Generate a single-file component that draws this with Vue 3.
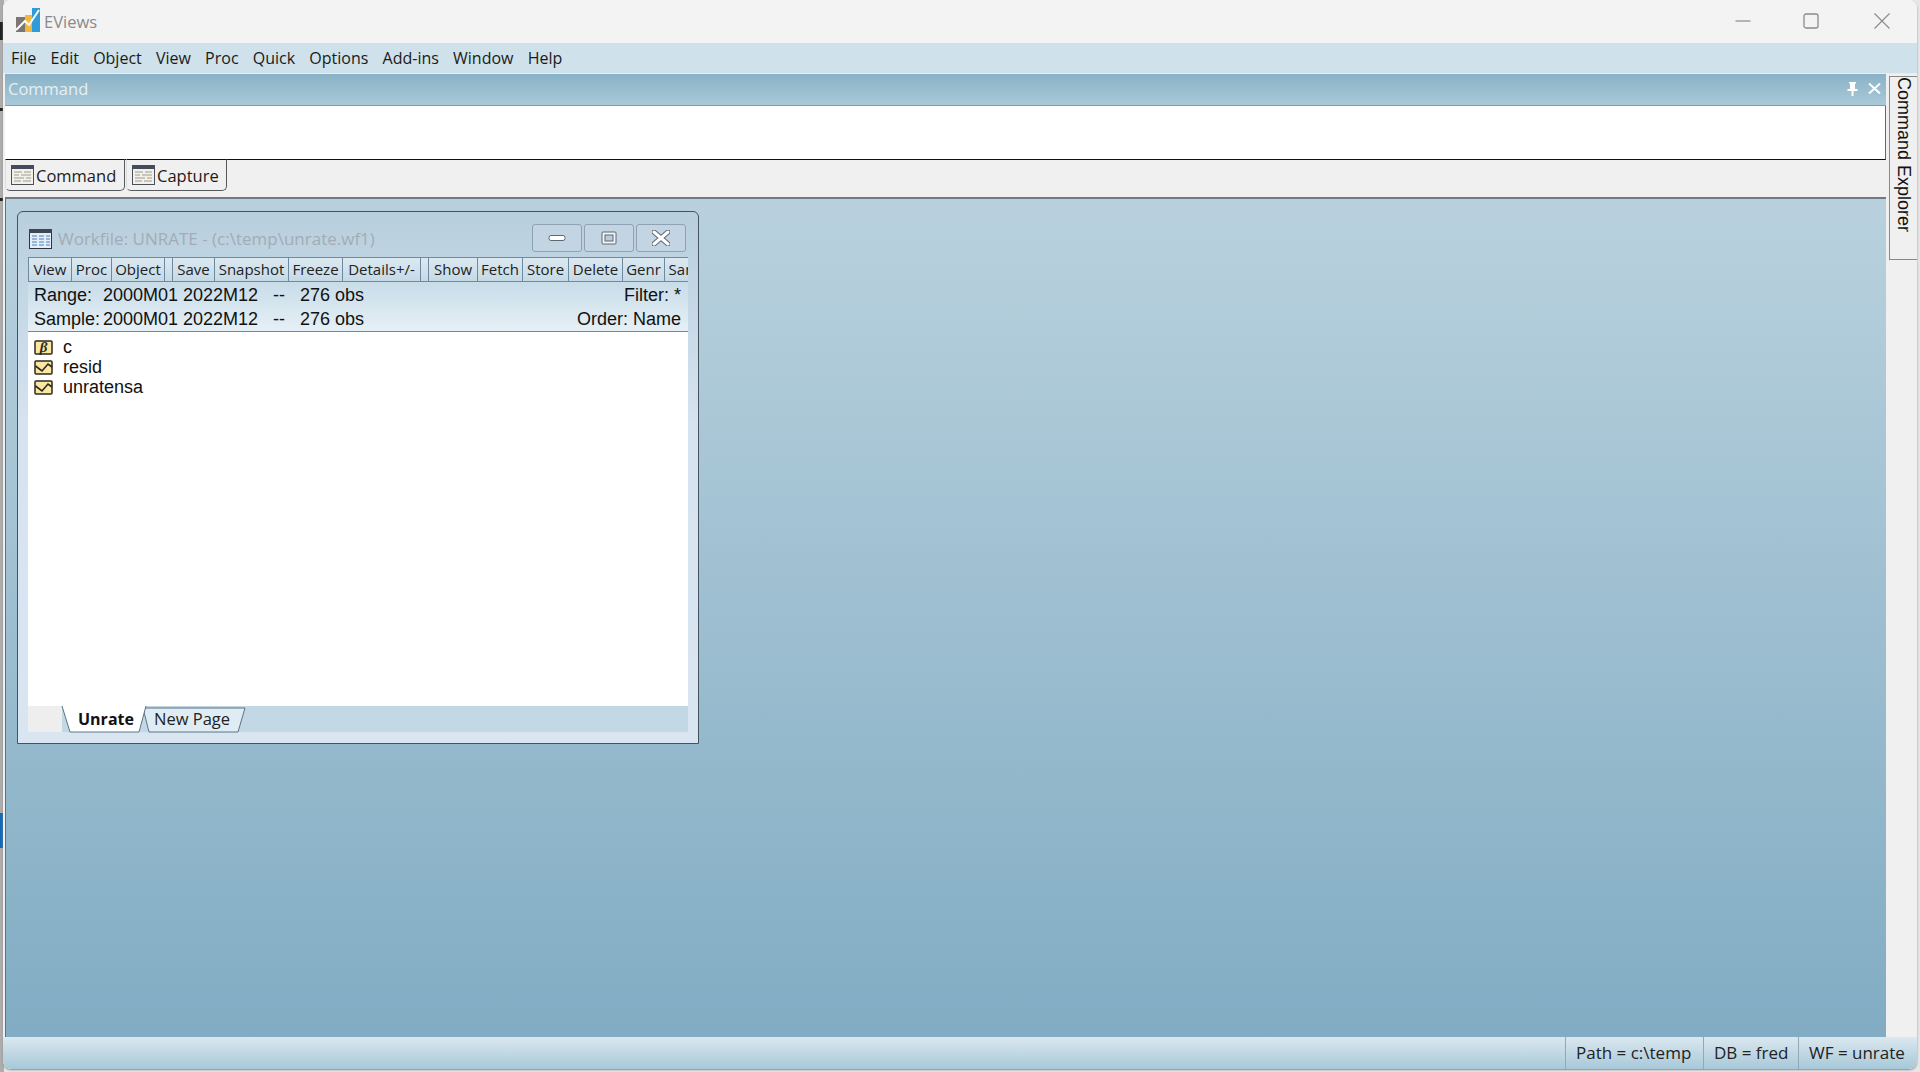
<template>
  <div class="desk">
    <!-- bits of other windows peeking out at the left edge -->
    <div class="peek peek-blue"></div>
    <div class="peek peek-dark1"></div>
    <div class="peek peek-dark2"></div>
    <div class="peek peek-dark3"></div>

    <div class="app">
      <header class="titlebar">
        <svg class="logo" width="24" height="24" viewBox="0 0 24 24">
          <rect x="0" y="9" width="9" height="15" fill="#7b7674" />
          <rect x="9" y="7" width="8" height="17" fill="#f4b63f" />
          <rect x="16" y="0" width="8" height="24" fill="#2f9bd9" />
          <path d="M0 22 L9 13 L13 17 L23 2" fill="none" stroke="#fff" stroke-width="2" />
        </svg>
        <span class="app-name">EViews</span>
        <div class="win-controls">
          <svg width="16" height="16" viewBox="0 0 16 16"><path d="M0.5 8h15" stroke="#8b8b8b" stroke-width="1.2" /></svg>
          <svg width="16" height="16" viewBox="0 0 16 16"><rect x="1" y="1" width="14" height="14" rx="2" fill="none" stroke="#8b8b8b" stroke-width="1.3" /></svg>
          <svg width="16" height="16" viewBox="0 0 16 16"><path d="M0.5 0.5l15 15M15.5 0.5l-15 15" stroke="#8b8b8b" stroke-width="1.2" /></svg>
        </div>
      </header>

      <nav class="menubar">
        <span v-for="item in menus" :key="item">{{ item }}</span>
      </nav>

      <div class="body">
        <main class="main">
          <div class="caption">
            <span>Command</span>
            <div class="caption-icons">
              <svg width="11" height="14" viewBox="0 0 11 14"><path d="M2 0h7v1.5H8V7h2.5v2H6.5v5h-2V9H.5V7H3V1.5H2z" fill="#fff" /></svg>
              <svg width="13" height="11" viewBox="0 0 13 11"><path d="M1 0.5l11 10M12 0.5l-11 10" stroke="#fff" stroke-width="2" /></svg>
            </div>
          </div>
          <div class="cmd-input"></div>
          <div class="cmd-tabs">
            <div v-for="t in cmdTabs" :key="t.label" class="cmd-tab" :style="{ width: t.width + 'px' }">
              <svg width="23" height="20" viewBox="0 0 23 20">
                <rect x="0.5" y="0.5" width="22" height="19" fill="#f4f1e8" stroke="#4a4f5c" />
                <rect x="0" y="0" width="23" height="4" fill="#454b5c" />
                <path d="M3 7h8M13 7h7M3 10h5M10 10h10M3 13h10M15 13h5M3 16h7M12 16h8" stroke="#9a9a98" />
              </svg>
              <span>{{ t.label }}</span>
            </div>
          </div>

          <div class="mdi">
            <section class="wf">
              <div class="wf-title">
                <svg class="wf-icon" width="23" height="20" viewBox="0 0 23 20">
                  <rect x="0.5" y="0.5" width="22" height="19" fill="#e4eef8" stroke="#2c3444" />
                  <rect x="0" y="0" width="23" height="4" fill="#3e4656" />
                  <path d="M3 7h5M10 7h5M17 7h4M3 10h5M10 10h5M17 10h4M3 13h5M10 13h5M17 13h4M3 16h5M10 16h5M17 16h4" stroke="#4f7fb6" />
                </svg>
                <span class="wf-name">Workfile: UNRATE - (c:\temp\unrate.wf1)</span>
                <div class="wf-btns">
                  <button class="wf-btn">
                    <svg width="18" height="8" viewBox="0 0 18 8"><rect x="1" y="1.5" width="16" height="5" rx="2" fill="#fff" stroke="#5d6873" /></svg>
                  </button>
                  <button class="wf-btn">
                    <svg width="16" height="14" viewBox="0 0 16 14"><rect x="1" y="1" width="14" height="12" rx="1" fill="#f3f6f9" stroke="#5d6873" /><rect x="4" y="4" width="8" height="6" fill="#b9ccdb" stroke="#5d6873" /></svg>
                  </button>
                  <button class="wf-btn">
                    <svg width="18" height="16" viewBox="0 0 18 16"><path d="M2 2l14 12M16 2L2 14" stroke="#5d6873" stroke-width="5" stroke-linecap="round" /><path d="M2 2l14 12M16 2L2 14" stroke="#fff" stroke-width="3" stroke-linecap="round" /></svg>
                  </button>
                </div>
              </div>

              <div class="wf-toolbar">
                <span
                  v-for="b in tools"
                  :key="b.label"
                  class="tool"
                  :class="{ 'tool-gap': b.gap, 'tool-end': b.end }"
                  :style="{ width: b.width + 'px' }"
                >{{ b.label }}</span>
              </div>

              <div class="wf-info">
                <div class="info-row">
                  <span class="i-label">Range:</span><span class="i-dates">2000M01 2022M12</span><span class="i-dash">--</span><span class="i-obs">276 obs</span>
                  <span class="i-right">Filter: *</span>
                </div>
                <div class="info-row">
                  <span class="i-label">Sample:</span><span class="i-dates">2000M01 2022M12</span><span class="i-dash">--</span><span class="i-obs">276 obs</span>
                  <span class="i-right">Order: Name</span>
                </div>
              </div>

              <ul class="wf-list">
                <li v-for="o in objects" :key="o.name">
                  <svg width="19" height="15" viewBox="0 0 19 15">
                    <rect x="1" y="1" width="17" height="13" rx="1" fill="#fbe7a2" stroke="#2a2a22" stroke-width="1.5" />
                    <text v-if="o.kind === 'coef'" x="9.5" y="12" text-anchor="middle" class="beta">β</text>
                    <path v-else d="M1.5 6 L8 11 L14 4 L18 7" fill="none" stroke="#2a2a22" stroke-width="1.6" />
                  </svg>
                  <span>{{ o.name }}</span>
                </li>
              </ul>

              <svg class="wf-tabs" width="660" height="28" viewBox="0 0 660 28">
                <rect x="0" y="0" width="660" height="26" fill="#c2d8e4" />
                <rect x="0" y="0" width="34" height="26" fill="#eeeeee" />
                <polygon points="115,2 217,2 210,26 121,26" fill="#e0ecf4" stroke="#5d7484" />
                <polygon points="34,0 118,0 111,26 42,26" fill="#fff" />
                <path d="M34 0 L42 26 H111 L118 0" fill="none" stroke="#5d7484" />
                <text x="50" y="19" class="tab-on">Unrate</text>
                <text x="126" y="19" class="tab-off">New Page</text>
              </svg>
            </section>
          </div>
        </main>

        <aside class="side">
          <div class="side-tab"><span>Command Explorer</span></div>
        </aside>
      </div>

      <footer class="statusbar">
        <span class="st-cell st-path">Path = c:\temp</span>
        <span class="st-cell st-db">DB = fred</span>
        <span class="st-cell st-wf">WF = unrate</span>
      </footer>
    </div>
  </div>
</template>

<script setup>
const menus = ['File', 'Edit', 'Object', 'View', 'Proc', 'Quick', 'Options', 'Add-ins', 'Window', 'Help']

const cmdTabs = [
  { label: 'Command', width: 120 },
  { label: 'Capture', width: 101 },
]

const tools = [
  { label: 'View', width: 43 },
  { label: 'Proc', width: 40 },
  { label: 'Object', width: 54, end: true },
  { label: 'Save', width: 42, gap: true },
  { label: 'Snapshot', width: 74 },
  { label: 'Freeze', width: 54 },
  { label: 'Details+/-', width: 79, end: true },
  { label: 'Show', width: 49, gap: true },
  { label: 'Fetch', width: 45 },
  { label: 'Store', width: 46 },
  { label: 'Delete', width: 54 },
  { label: 'Genr', width: 42 },
  { label: 'Sample', width: 60 },
]

const objects = [
  { name: 'c', kind: 'coef' },
  { name: 'resid', kind: 'series' },
  { name: 'unratensa', kind: 'series' },
]
</script>

<style>
body { margin: 0; background: #e6e6e6; }
</style>

<style scoped>
.desk {
  position: relative;
  width: 1920px;
  height: 1072px;
  overflow: hidden;
  background: linear-gradient(90deg, #adadad 0, #adadad 4px, #e6e6e6 4px);
  font-family: "Open Sans", "Noto Sans", sans-serif;
  color: #1b1b1b;
}

.peek { position: absolute; left: 0; width: 3px; }
.peek-blue { top: 813px; height: 35px; background: #1668b4; }
.peek-dark1 { top: 22px; height: 18px; background: #222; }
.peek-dark2 { top: 108px; height: 3px; background: #222; }
.peek-dark3 { top: 198px; height: 3px; background: #222; }

.app {
  position: absolute;
  left: 3px;
  top: 0;
  width: 1914px;
  height: 1069px;
  display: flex;
  flex-direction: column;
  background: #f0f0f0;
  border-radius: 8px;
  overflow: hidden;
  box-shadow: 0 1px 2px #8a8a8a;
}

/* title bar */
.titlebar {
  height: 43px;
  flex: none;
  display: flex;
  align-items: center;
  padding-left: 13px;
  background: #f3f3f3;
}
.logo { margin-top: -3px; }
.app-name {
  margin-left: 4px;
  font-size: 16.5px;
  color: #8a8a8a;
}
.win-controls {
  margin-left: auto;
  margin-right: 27px;
  display: flex;
  gap: 55px;
  margin-top: -2px;
}
.win-controls svg:first-child { margin-right: -3px; }

/* menu */
.menubar {
  height: 30px;
  flex: none;
  display: flex;
  align-items: center;
  gap: 14.2px;
  padding-left: 8px;
  background: #cfe1ea;
  border-bottom: 1px solid #e3eef3;
  font-size: 16px;
}

.body {
  flex: 1;
  min-height: 0;
  display: flex;
}

.main {
  width: 1883px;
  display: flex;
  flex-direction: column;
  padding-left: 2px;
  box-sizing: border-box;
}

.caption {
  height: 32px;
  flex: none;
  display: flex;
  align-items: center;
  padding: 0 0 2px 3px;
  box-sizing: border-box;
  background: linear-gradient(#8ab2c6, #a9c9d8);
  border-bottom: 1px solid #8c9aa3;
  color: #e4f0f5;
  font-size: 16.5px;
}
.caption-icons {
  margin-left: auto;
  margin-right: 5px;
  display: flex;
  align-items: center;
  gap: 10px;
}

.cmd-input {
  height: 53px;
  flex: none;
  background: #fff;
  border-bottom: 1.5px solid #111;
  border-right: 1px solid #666;
}

.cmd-tabs {
  height: 39px;
  flex: none;
  display: flex;
  gap: 1px;
  background: #f0f0f0;
  border-bottom: 2px solid #6f7a82;
  box-sizing: border-box;
}
.cmd-tab {
  height: 32px;
  box-sizing: border-box;
  display: flex;
  align-items: center;
  gap: 2px;
  padding-left: 5px;
  margin-top: -1px;
  border: 1px solid #55585c;
  border-top-color: #111;
  border-left-color: #ddd;
  border-radius: 0 0 5px 5px;
  background: #f0f0f0;
  font-size: 16.5px;
}

.mdi {
  position: relative;
  flex: 1;
  background: linear-gradient(#b9d1de, #81acc3);
  border-left: 1px solid #5d7280;
}

/* workfile window */
.wf {
  position: absolute;
  left: 11px;
  top: 12px;
  width: 682px;
  height: 533px;
  box-sizing: border-box;
  padding: 0 10px;
  display: flex;
  flex-direction: column;
  border: 1px solid #46535c;
  border-radius: 6px 6px 0 0;
  background: linear-gradient(#b8cfde, #d6e3f0 40%, #d9e6f2);
}
.wf-title {
  height: 45px;
  flex: none;
  display: flex;
  align-items: center;
  padding-top: 8px;
  box-sizing: border-box;
  padding-left: 1px;
}
.wf-name {
  margin-left: 6px;
  font-size: 17px;
  color: #a3acb4;
}
.wf-btns {
  margin-left: auto;
  margin-right: 2px;
  margin-top: -1px;
  display: flex;
  gap: 2px;
}
.wf-btn {
  width: 50px;
  height: 28px;
  padding: 0;
  display: flex;
  align-items: center;
  justify-content: center;
  border: 1px solid #8ea2b4;
  border-radius: 3px;
  background: #c3d5e3;
}

.wf-toolbar {
  height: 25px;
  flex: none;
  display: flex;
  overflow: hidden;
  background: linear-gradient(#dce9f1, #c5dae6);
  border-top: 1px solid #6f8aa0;
  border-bottom: 1px solid #6f8aa0;
  box-sizing: border-box;
}
.tool {
  flex: none;
  box-sizing: border-box;
  height: 100%;
  text-align: center;
  font-size: 15px;
  line-height: 22px;
  border-left: 1px solid #6f8aa0;
  color: #222;
  white-space: nowrap;
  overflow: hidden;
}
.tool-gap { margin-left: 7px; }
.tool-end { border-right: 1px solid #6f8aa0; }

.wf-info {
  height: 50px;
  flex: none;
  box-sizing: border-box;
  padding: 1px 7px 0 6px;
  background: linear-gradient(#c8dce8, #e6f0f6);
  border-bottom: 1px solid #6f8aa0;
  font-family: "Liberation Sans", Arial, sans-serif;
  font-size: 18px;
  color: #111;
}
.info-row {
  height: 24px;
  display: flex;
  align-items: center;
  white-space: nowrap;
}
.i-label { width: 69px; }
.i-dates { width: 170px; }
.i-dash { width: 27px; }
.i-right { margin-left: auto; }

.wf-list {
  flex: 1;
  margin: 0;
  padding: 5px 0 0 6px;
  list-style: none;
  background: #fff;
  font-family: "Liberation Sans", Arial, sans-serif;
  font-size: 18px;
  color: #111;
}
.wf-list li {
  height: 20px;
  display: flex;
  align-items: center;
  gap: 10px;
}
.beta {
  font-family: "Liberation Serif", serif;
  font-style: italic;
  font-weight: 700;
  font-size: 15px;
  fill: #2a2a22;
}

.wf-tabs {
  flex: none;
  display: block;
  margin-bottom: 9px;
}
.tab-on {
  font-family: "Open Sans", sans-serif;
  font-size: 16px;
  font-weight: 700;
  fill: #111;
}
.tab-off {
  font-family: "Open Sans", sans-serif;
  font-size: 16.5px;
  fill: #222;
}

/* right dock */
.side {
  flex: 1;
  background: #f0f0f0;
  padding: 2px 0 0 3px;
}
.side-tab {
  width: 28px;
  height: 184px;
  box-sizing: border-box;
  border: 1px solid #888;
  border-right: none;
  background: #f0f0f0;
  color: #111;
  display: flex;
  justify-content: center;
}
.side-tab span {
  writing-mode: vertical-rl;
  font-family: "Liberation Sans", Arial, sans-serif;
  font-size: 18px;
  white-space: nowrap;
}

/* status bar */
.statusbar {
  height: 32px;
  flex: none;
  display: flex;
  justify-content: flex-end;
  padding-right: 1px;
  background: linear-gradient(#dbe8ef, #a7c8d9);
  border-radius: 0 0 8px 8px;
  font-size: 17px;
  color: #222;
}
.st-cell {
  box-sizing: border-box;
  padding-left: 10px;
  border-left: 1px solid #8fa9b7;
  line-height: 32px;
  white-space: nowrap;
}
.st-path { width: 138px; }
.st-db { width: 95px; }
.st-wf { width: 118px; }
</style>
